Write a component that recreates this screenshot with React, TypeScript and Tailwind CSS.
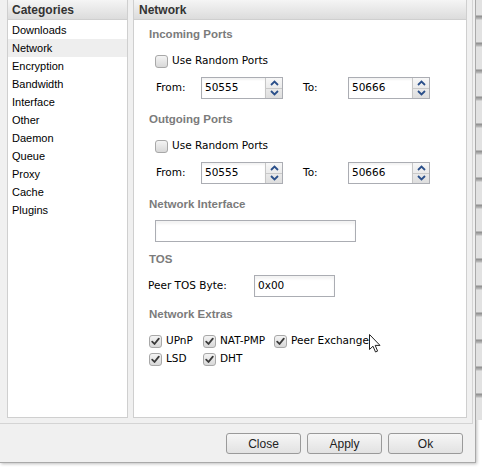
import React from "react"

const categories = [
  "Downloads",
  "Network",
  "Encryption",
  "Bandwidth",
  "Interface",
  "Other",
  "Daemon",
  "Queue",
  "Proxy",
  "Cache",
  "Plugins",
]

function Checkbox({ checked = false }: { checked?: boolean }) {
  return (
    <span className="flex h-[13px] w-[13px] shrink-0 items-center justify-center rounded-[3px] border border-[#a8a8a8] bg-gradient-to-b from-[#f4f4f4] to-[#d8d8d8]">
      {checked && (
        <svg width="9" height="9" viewBox="0 0 9 9">
          <path d="M1.2 4.6 L3.5 7 L7.8 1.6" fill="none" stroke="#3a3a3a" strokeWidth="1.8" strokeLinecap="round" strokeLinejoin="round" />
        </svg>
      )}
    </span>
  )
}

function SectionTitle({ children, mt }: { children: React.ReactNode; mt: string }) {
  return (
    <div className={`${mt} h-[14px] pl-[15px] font-['Liberation_Sans',Arial,sans-serif] text-[11.5px] font-bold leading-[14px] text-[#7b7b7b]`}>
      {children}
    </div>
  )
}

function Spinner({ value }: { value: string }) {
  return (
    <div className="flex h-[22px] w-[82px] border border-[#abadb3] bg-white">
      <div className="flex flex-1 items-center pl-[3px] text-[10.5px] text-black shadow-[inset_0_2px_2px_rgba(0,0,0,0.05)]">{value}</div>
      <div className="flex w-[17px] flex-col border-l border-[#c6c6c6] bg-gradient-to-b from-[#f7f7f7] to-[#dedede]">
        <div className="flex flex-1 items-center justify-center border-b border-[#c9c9c9]">
          <svg width="9" height="6" viewBox="0 0 9 6">
            <path d="M1 5 L4.5 1.5 L8 5" fill="none" stroke="#2a4f8a" strokeWidth="1.8" />
          </svg>
        </div>
        <div className="flex flex-1 items-center justify-center">
          <svg width="9" height="6" viewBox="0 0 9 6">
            <path d="M1 1 L4.5 4.5 L8 1" fill="none" stroke="#2a4f8a" strokeWidth="1.8" />
          </svg>
        </div>
      </div>
    </div>
  )
}

function PortRange({ mt }: { mt: string }) {
  return (
    <div className={`${mt} flex h-[22px] items-center pl-[22px]`}>
      <span className="w-[45px]">From:</span>
      <Spinner value="50555" />
      <span className="ml-[20px] w-[45px]">To:</span>
      <Spinner value="50666" />
    </div>
  )
}

function TextBox({ w, value = "" }: { w: string; value?: string }) {
  return (
    <div className={`${w} flex h-[22px] items-center border border-[#abadb3] bg-white pl-[3px] shadow-[inset_0_3px_3px_rgba(0,0,0,0.05)]`}>
      {value}
    </div>
  )
}

function Button({ label }: { label: string }) {
  return (
    <button className="flex h-[21px] w-[75px] items-center justify-center rounded-[3px] border border-[#9a9a9a] bg-gradient-to-b from-[#f6f6f6] to-[#e2e2e2] font-['Liberation_Sans',Arial,sans-serif] text-[12px] text-[#222]">
      {label}
    </button>
  )
}

export default function App() {
  return (
    <div className="relative flex h-[467px] w-[482px] overflow-hidden bg-white">
      <div className="flex h-[463px] w-[476px] shrink-0 flex-col border-r border-b border-[#a9a9a9] bg-[#f0f0f0] shadow-[1px_1px_3px_rgba(0,0,0,0.25)]">
        <div className="flex h-[424px] w-[473px] gap-[5px] border-r border-b border-[#d4d4d4] pl-[7px]">
          {/* Categories */}
          <div className="flex h-[418px] w-[121px] flex-col border-r border-b border-l border-[#cfcfcf]">
            <div className="flex h-[20px] items-center border-b border-[#cfcfcf] bg-gradient-to-b from-[#f5f5f5] to-[#dcdcdc] pl-[4px] font-['Liberation_Sans',Arial,sans-serif] text-[12px] font-bold text-[#333]">
              Categories
            </div>
            <div className="flex-1 bg-white pt-[1px] font-['Liberation_Sans',Arial,sans-serif] text-[11px] text-black">
              {categories.map((c) => (
                <div key={c} className={`flex h-[18px] items-center pl-[4px] ${c === "Network" ? "bg-[#eeeeee]" : ""}`}>
                  {c}
                </div>
              ))}
            </div>
          </div>

          {/* Network */}
          <div className="flex h-[418px] w-[334px] flex-col border-r border-b border-l border-[#cfcfcf]">
            <div className="flex h-[20px] items-center border-b border-[#cfcfcf] bg-gradient-to-b from-[#f5f5f5] to-[#dcdcdc] pl-[5px] font-['Liberation_Sans',Arial,sans-serif] text-[12px] font-bold text-[#333]">
              Network
            </div>
            <div className="relative flex-1 bg-white font-['DejaVu_Sans',Verdana,sans-serif] text-[10.5px] text-black">
              <SectionTitle mt="mt-[7px]">Incoming Ports</SectionTitle>
              <div className="mt-[12px] flex h-[16px] items-center gap-[4px] pl-[21px]">
                <Checkbox />
                <span>Use Random Ports</span>
              </div>
              <PortRange mt="mt-[8px]" />

              <SectionTitle mt="mt-[13px]">Outgoing Ports</SectionTitle>
              <div className="mt-[12px] flex h-[16px] items-center gap-[4px] pl-[21px]">
                <Checkbox />
                <span>Use Random Ports</span>
              </div>
              <PortRange mt="mt-[8px]" />

              <SectionTitle mt="mt-[13px]">Network Interface</SectionTitle>
              <div className="mt-[9px] pl-[21px]">
                <TextBox w="w-[201px]" />
              </div>

              <SectionTitle mt="mt-[10px]">TOS</SectionTitle>
              <div className="mt-[9px] flex h-[22px] items-center pl-[14px]">
                <span className="w-[106px]">Peer TOS Byte:</span>
                <TextBox w="w-[81px]" value="0x00" />
              </div>

              <SectionTitle mt="mt-[10px]">Network Extras</SectionTitle>
              <div className="mt-[12px] grid grid-cols-[54px_71px_auto] gap-y-[2px] pl-[15px]">
                <div className="flex h-[16px] items-center gap-[4px]"><Checkbox checked /><span>UPnP</span></div>
                <div className="flex h-[16px] items-center gap-[4px]"><Checkbox checked /><span>NAT-PMP</span></div>
                <div className="flex h-[16px] items-center gap-[4px]"><Checkbox checked /><span>Peer Exchange</span></div>
                <div className="flex h-[16px] items-center gap-[4px]"><Checkbox checked /><span>LSD</span></div>
                <div className="flex h-[16px] items-center gap-[4px]"><Checkbox checked /><span>DHT</span></div>
              </div>

              {/* mouse pointer */}
              <svg className="absolute left-[235px] top-[314px]" width="12" height="19" viewBox="0 0 12 19">
                <path d="M0.5 0.5 L0.5 15.5 L4 12.2 L6.5 18 L8.6 17.1 L6.2 11.4 L11 11.4 Z" fill="white" stroke="#222" strokeWidth="1" strokeLinejoin="round" />
              </svg>
            </div>
          </div>
        </div>

        <div className="flex justify-end gap-[6px] pt-[9px] pr-[12px]">
          <Button label="Close" />
          <Button label="Apply" />
          <Button label="Ok" />
        </div>
      </div>
      <div className="h-[420px] w-[6px] bg-[repeating-linear-gradient(180deg,#e2e2e2_0px,#e2e2e2_15px,#8c8c8c_16px,#bdbdbd_19px,#e2e2e2_20px,#e2e2e2_27px)]" />
    </div>
  )
}
